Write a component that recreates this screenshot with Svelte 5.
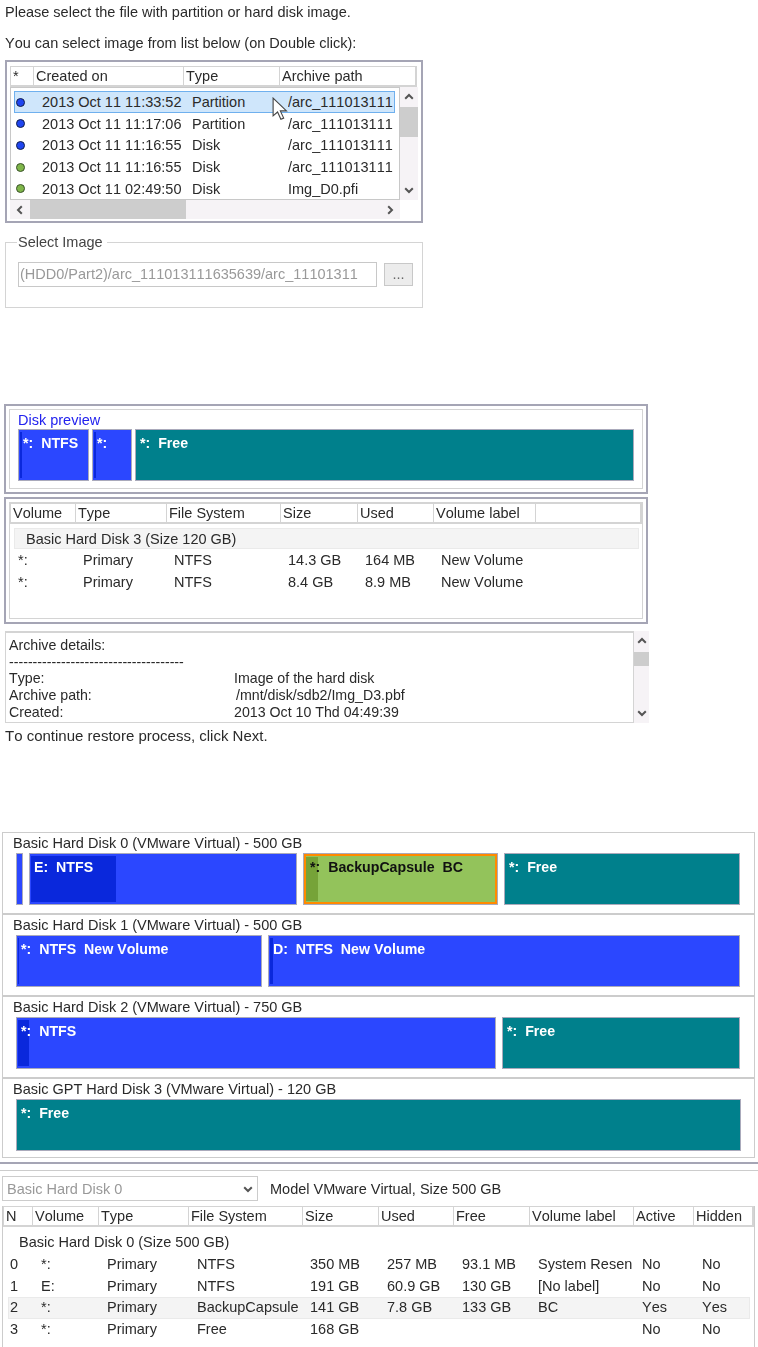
<script>
	const images = [
		{ color: 'blue', date: '2013 Oct 11 11:33:52', type: 'Partition', path: '/arc_111013111', selected: true },
		{ color: 'blue', date: '2013 Oct 11 11:17:06', type: 'Partition', path: '/arc_111013111' },
		{ color: 'blue', date: '2013 Oct 11 11:16:55', type: 'Disk', path: '/arc_111013111' },
		{ color: 'green', date: '2013 Oct 11 11:16:55', type: 'Disk', path: '/arc_111013111' },
		{ color: 'green', date: '2013 Oct 11 02:49:50', type: 'Disk', path: 'Img_D0.pfi' }
	];

	const previewBars = [
		{ w: 71, kind: 'ntfs', text: '*:  NTFS', fill: 2 },
		{ w: 40, kind: 'ntfs', text: '*:', fill: 2 },
		{ w: 499, kind: 'free', text: '*:  Free' }
	];

	const restoreHead = ['Volume', 'Type', 'File System', 'Size', 'Used', 'Volume label', ''];
	const restoreRows = [
		['*:', 'Primary', 'NTFS', '14.3 GB', '164 MB', 'New Volume'],
		['*:', 'Primary', 'NTFS', '8.4 GB', '8.9 MB', 'New Volume']
	];

	const disks = [
		{
			title: 'Basic Hard Disk 0 (VMware Virtual) - 500 GB',
			bars: [
				{ w: 7, kind: 'ntfs', text: '' },
				{ w: 268, kind: 'ntfs', text: 'E:  NTFS', fill: 85 },
				{ w: 195, kind: 'capsule', text: '*:  BackupCapsule  BC', fill: 12 },
				{ w: 236, kind: 'free', text: '*:  Free' }
			]
		},
		{
			title: 'Basic Hard Disk 1 (VMware Virtual) - 500 GB',
			bars: [
				{ w: 246, kind: 'ntfs', text: '*:  NTFS  New Volume', fill: 1 },
				{ w: 472, kind: 'ntfs', text: 'D:  NTFS  New Volume', fill: 3 }
			]
		},
		{
			title: 'Basic Hard Disk 2 (VMware Virtual) - 750 GB',
			bars: [
				{ w: 480, kind: 'ntfs', text: '*:  NTFS', fill: 11 },
				{ w: 238, kind: 'free', text: '*:  Free' }
			]
		},
		{
			title: 'Basic GPT Hard Disk 3 (VMware Virtual) - 120 GB',
			bars: [{ w: 725, kind: 'free', text: '*:  Free' }]
		}
	];

	const partHead = ['N', 'Volume', 'Type', 'File System', 'Size', 'Used', 'Free', 'Volume label', 'Active', 'Hidden'];
	const partRows = [
		['0', '*:', 'Primary', 'NTFS', '350 MB', '257 MB', '93.1 MB', 'System Resen', 'No', 'No'],
		['1', 'E:', 'Primary', 'NTFS', '191 GB', '60.9 GB', '130 GB', '[No label]', 'No', 'No'],
		['2', '*:', 'Primary', 'BackupCapsule', '141 GB', '7.8 GB', '133 GB', 'BC', 'Yes', 'Yes'],
		['3', '*:', 'Primary', 'Free', '168 GB', '', '', '', 'No', 'No']
	];
</script>

{#snippet chevron(dir)}
	<svg class="chev {dir}" width="10" height="10" viewBox="0 0 10 10">
		<path d="M1.2 6.8 L5 3 L8.8 6.8" fill="none" stroke="#555" stroke-width="2" />
	</svg>
{/snippet}

{#snippet bar(b)}
	<div class="bar {b.kind}" style="width: {b.w}px">
		{#if b.fill}
			<div class="fill" style="width: {b.fill}px"></div>
		{/if}
		<span class="bar-text">{b.text}</span>
	</div>
{/snippet}

<div class="page">
	<section class="select-image">
		<p class="line">Please select the file with partition or hard disk image.</p>
		<p class="line second">You can select image from list below (on Double click):</p>

		<div class="image-panel">
			<div class="head image-head">
				<span>*</span><span>Created on</span><span>Type</span><span>Archive path</span>
			</div>
			<div class="image-body">
				<div class="image-list">
					{#each images as img}
						<div class="image-row" class:selected={img.selected}>
							<i class="dot {img.color}"></i>
							<span>{img.date}</span>
							<span>{img.type}</span>
							<span class="clip">{img.path}</span>
						</div>
					{/each}
				</div>
				<div class="vscroll tall">
					{@render chevron('up')}
					<div class="vthumb"></div>
					{@render chevron('down')}
				</div>
			</div>
			<div class="hscroll">
				{@render chevron('left')}
				<div class="hthumb"></div>
				{@render chevron('right')}
			</div>
			<!-- mouse pointer from the screen capture -->
			<svg class="cursor" width="16" height="24" viewBox="0 0 14.4 21.6">
				<path d="M1 1 V17 L5 13.5 L8 20 L10.5 19 L7.5 12.5 L13 12.5 Z" fill="#fff" stroke="#444" stroke-width="1" />
			</svg>
		</div>

		<fieldset class="group">
			<legend>Select Image</legend>
			<div class="file-row">
				<div class="file-input">(HDD0/Part2)/arc_111013111635639/arc_11101311</div>
				<div class="file-btn">...</div>
			</div>
		</fieldset>
	</section>

	<section class="restore">
		<div class="frame preview-frame">
			<div class="inset">
				<div class="preview-title">Disk preview</div>
				<div class="bars tight">
					{#each previewBars as b}
						{@render bar(b)}
					{/each}
				</div>
			</div>
		</div>

		<div class="frame table-frame">
			<div class="inset">
				<div class="head restore-cols">
					{#each restoreHead as h}<span>{h}</span>{/each}
				</div>
				<div class="group-row">Basic Hard Disk 3 (Size 120 GB)</div>
				{#each restoreRows as row}
					<div class="row restore-cols">
						{#each row as cell}<span>{cell}</span>{/each}
					</div>
				{/each}
			</div>
		</div>

		<div class="details">
			<div class="details-text">
				<div>Archive details:</div>
				<div class="dashes">-------------------------------------</div>
				<div class="kv"><span>Type:</span><span>Image of the hard disk</span></div>
				<div class="kv"><span>Archive path:</span><span class="nudge">/mnt/disk/sdb2/Img_D3.pbf</span></div>
				<div class="kv"><span>Created:</span><span>2013 Oct 10 Thd 04:49:39</span></div>
			</div>
			<div class="vscroll short">
				{@render chevron('up')}
				<div class="vthumb"></div>
				{@render chevron('down')}
			</div>
		</div>
		<p class="continue">To continue restore process, click Next.</p>
	</section>

	<section class="disks">
		<div class="disk-list">
			{#each disks as disk}
				<div class="disk">
					<div class="disk-title">{disk.title}</div>
					<div class="bars">
						{#each disk.bars as b}
							{@render bar(b)}
						{/each}
					</div>
				</div>
			{/each}
		</div>
		<div class="rule dark"></div>
		<div class="rule light"></div>

		<div class="model-row">
			<div class="disk-select">
				<span>Basic Hard Disk 0</span>
				{@render chevron('down')}
			</div>
			<span>Model VMware Virtual, Size 500 GB</span>
		</div>

		<div class="part-table">
			<div class="head part-cols">
				{#each partHead as h}<span>{h}</span>{/each}
			</div>
			<div class="part-group">Basic Hard Disk 0 (Size 500 GB)</div>
			{#each partRows as row, i}
				<div class="row part-row" class:marked={i === 2}>
					{#each row as cell}<span>{cell}</span>{/each}
				</div>
			{/each}
		</div>
	</section>
</div>

<style>
	:global(body) {
		background: #fff;
	}

	.page {
		width: 758px;
		height: 1347px;
		overflow: hidden;
		font-family: "Liberation Sans", Arial, sans-serif;
		font-size: 14.5px;
		font-kerning: none;
		color: #2a2a2a;
		/* the source captures were rescaled, so everything is a bit soft */
		filter: blur(0.3px);
	}

	p {
		margin: 0;
	}

	/* first screenshot */
	.select-image {
		padding-left: 5px;
	}

	.line {
		line-height: 24px;
	}

	.second {
		margin-top: 7px;
		margin-bottom: 5px;
	}

	.image-panel {
		position: relative;
		box-sizing: border-box;
		width: 418px;
		height: 163px;
		border: 2px solid #a5a5b5;
		padding: 4px 3px;
	}

	.head {
		display: grid;
		box-sizing: border-box;
		height: 21px;
		border: 1px solid #d4d4d4;
		border-bottom: 2px solid #d4d4d4;
		line-height: 18px;
	}

	.head span {
		padding-left: 2px;
		border-right: 1px solid #d4d4d4;
		white-space: nowrap;
		overflow: hidden;
	}

	.image-head {
		grid-template-columns: 23px 150px 96px 1fr;
		width: 407px;
	}

	.image-body {
		display: flex;
		height: 113px;
	}

	.image-list {
		box-sizing: border-box;
		width: 390px;
		border: 1px solid #c8c8c8;
		padding-top: 3px;
	}

	.image-row {
		display: grid;
		grid-template-columns: 27px 150px 96px 107px;
		box-sizing: border-box;
		width: 381px;
		height: 21.7px;
		margin-left: 3px;
		line-height: 20px;
		align-items: center;
		border: 1px solid transparent;
	}

	.image-row.selected {
		background: #cfe6fb;
		border-color: #6fb0ee;
	}

	.clip {
		overflow: hidden;
		white-space: nowrap;
	}

	.dot {
		display: block;
		box-sizing: border-box;
		width: 9px;
		height: 9px;
		margin-left: 1px;
		border-radius: 50%;
		border: 1px solid #12204a;
	}

	.dot.blue {
		background: #1f45f0;
	}

	.dot.green {
		background: #7fb64a;
		border-color: #39512a;
	}

	.vscroll {
		display: flex;
		flex-direction: column;
		align-items: center;
		background: #f6f3f6;
		justify-content: space-between;
	}

	.vscroll.tall {
		width: 18px;
	}

	.vscroll.tall .vthumb {
		height: 36px;
		margin-bottom: 43px;
	}

	.vthumb {
		width: 100%;
		background: #cdcdcd;
	}

	.chev {
		display: block;
		flex: none;
	}

	.chev.down {
		transform: rotate(180deg);
	}

	.chev.left {
		transform: rotate(-90deg);
	}

	.chev.right {
		transform: rotate(90deg);
	}

	.vscroll .chev {
		margin: 5px 0;
	}

	.hscroll {
		display: flex;
		align-items: center;
		width: 390px;
		height: 19px;
		background: #f6f3f6;
	}

	.hscroll .chev {
		margin: 0 5px;
	}

	.hthumb {
		width: 156px;
		height: 100%;
		background: #cdcdcd;
		margin-right: auto;
	}

	.cursor {
		position: absolute;
		left: 265px;
		top: 35px;
	}

	.group {
		box-sizing: border-box;
		width: 418px;
		height: 74px;
		margin: 11px 0 0;
		padding: 12px 9px 0 12px;
		border: 1px solid #d4d4d4;
	}

	.group legend {
		padding: 0 4px 0 1px;
		margin-left: -1px;
		line-height: 16px;
		color: #444;
	}

	.file-row {
		display: flex;
		align-items: center;
		gap: 7px;
	}

	.file-input {
		box-sizing: border-box;
		width: 359px;
		height: 25px;
		padding-left: 1px;
		border: 1px solid #c8c8c8;
		line-height: 23px;
		color: #999;
		white-space: nowrap;
		overflow: hidden;
	}

	.file-btn {
		box-sizing: border-box;
		width: 29px;
		height: 23px;
		background: #ececec;
		border: 1px solid #c8c8c8;
		text-align: center;
		line-height: 20px;
		color: #666;
	}

	/* second screenshot */
	.restore {
		margin-top: 96px;
		padding-left: 4px;
	}

	.frame {
		box-sizing: border-box;
		width: 644px;
		border: 2px solid #a5a5b5;
		padding: 3px;
	}

	.inset {
		box-sizing: border-box;
		height: 100%;
		border: 1px solid #d4d4d4;
	}

	.preview-frame {
		height: 90px;
	}

	.preview-title {
		color: #2222ee;
		padding: 2px 0 0 8px;
		line-height: 16px;
	}

	.bars {
		display: flex;
		gap: 6px;
		padding-left: 13px;
	}

	.bars.tight {
		gap: 3px;
		padding-left: 8px;
		margin-top: 1px;
	}

	.bar {
		position: relative;
		box-sizing: border-box;
		height: 52px;
		border: 1px solid #aab;
		color: #fff;
		font-weight: bold;
		font-size: 14.2px;
		overflow: hidden;
		flex: none;
	}

	.bar.ntfs {
		background: #2b47ff;
	}

	.bar.free {
		background: #00808c;
	}

	.bar.capsule {
		background: #93c35b;
		border: 1px solid #aab;
		outline: 2px solid #ff8a00;
		outline-offset: -3px;
		color: #111;
	}

	.bar-text {
		position: relative;
		display: block;
		padding: 5px 0 0 4px;
		line-height: 16px;
		white-space: pre;
	}

	.capsule .bar-text {
		padding-left: 6px;
	}

	.fill {
		position: absolute;
		left: 1px;
		top: 2px;
		bottom: 2px;
		background: #0a28dc;
	}

	.capsule .fill {
		left: 2px;
		top: 3px;
		bottom: 3px;
		background: #76a338;
	}

	.table-frame {
		height: 127px;
		margin-top: 3px;
	}

	.restore-cols {
		grid-template-columns: 65px 91px 114px 77px 76px 102px 1fr;
	}

	.row {
		display: grid;
		height: 21.7px;
		line-height: 21px;
	}

	.row span {
		padding-left: 8px;
		overflow: hidden;
		white-space: nowrap;
	}

	.group-row {
		margin: 4px 3px 1px 4px;
		height: 21px;
		padding-left: 11px;
		background: #f4f4f4;
		border: 1px solid #eaeaea;
		box-sizing: border-box;
		line-height: 20px;
	}

	.details {
		display: flex;
		width: 644px;
		height: 92px;
		margin: 7px 0 0 1px;
	}

	.details-text {
		box-sizing: border-box;
		width: 629px;
		border: 1px solid #d4d4d4;
		border-top-width: 2px;
		padding: 4px 3px 0;
		line-height: 17px;
		font-size: 14.2px;
	}

	.dashes {
		height: 16px;
		line-height: 16px;
	}

	.kv {
		display: grid;
		grid-template-columns: 225px 1fr;
	}

	.nudge {
		padding-left: 2px;
	}

	.vscroll.short {
		width: 15px;
	}

	.vscroll.short .vthumb {
		height: 14px;
		margin-bottom: 36px;
	}

	.continue {
		padding-left: 1px;
		font-size: 15px;
		line-height: 18px;
		margin-top: 4px;
	}

	/* third screenshot */
	.disks {
		margin-top: 87px;
	}

	.disk-list {
		box-sizing: border-box;
		width: 753px;
		margin-left: 2px;
		border: 1px solid #ccc;
	}

	.disk {
		box-sizing: border-box;
		height: 82px;
		border-bottom: 2px solid #ccc;
	}

	.disk:last-child {
		height: 78px;
		border-bottom: none;
	}

	.disk-title {
		padding: 2px 0 0 10px;
		height: 20px;
		box-sizing: border-box;
		line-height: 16px;
	}

	.rule {
		height: 1px;
	}

	.rule.dark {
		height: 2px;
		margin-top: 4px;
		background: #a5a5b5;
	}

	.rule.light {
		margin-top: 6px;
		background: #ccc;
	}

	.model-row {
		display: flex;
		align-items: center;
		gap: 12px;
		margin: 5px 0 0 2px;
	}

	.disk-select {
		display: flex;
		align-items: center;
		justify-content: space-between;
		box-sizing: border-box;
		width: 256px;
		height: 25px;
		padding: 0 4px;
		border: 1px solid #ccc;
		color: #999;
	}

	.part-table {
		box-sizing: border-box;
		width: 753px;
		height: 150px;
		margin: 5px 0 0 2px;
		border-left: 1px solid #ccc;
		border-right: 1px solid #ccc;
	}

	.part-cols {
		grid-template-columns: 29px 66px 90px 114px 76px 75px 76px 104px 60px 1fr;
	}

	.part-group {
		height: 24px;
		margin-top: 3px;
		padding-left: 16px;
		line-height: 24px;
	}

	.row.part-row {
		margin: 0 4px 0 5px;
		grid-template-columns: 25px 66px 90px 113px 77px 75px 76px 104px 60px 1fr;
	}

	.row.part-row span {
		padding-left: 8px;
	}

	.row.part-row span:first-child {
		padding-left: 2px;
	}

	.row.marked {
		background: #f4f4f4;
		box-shadow: inset 0 0 0 1px #eaeaea;
	}
</style>
